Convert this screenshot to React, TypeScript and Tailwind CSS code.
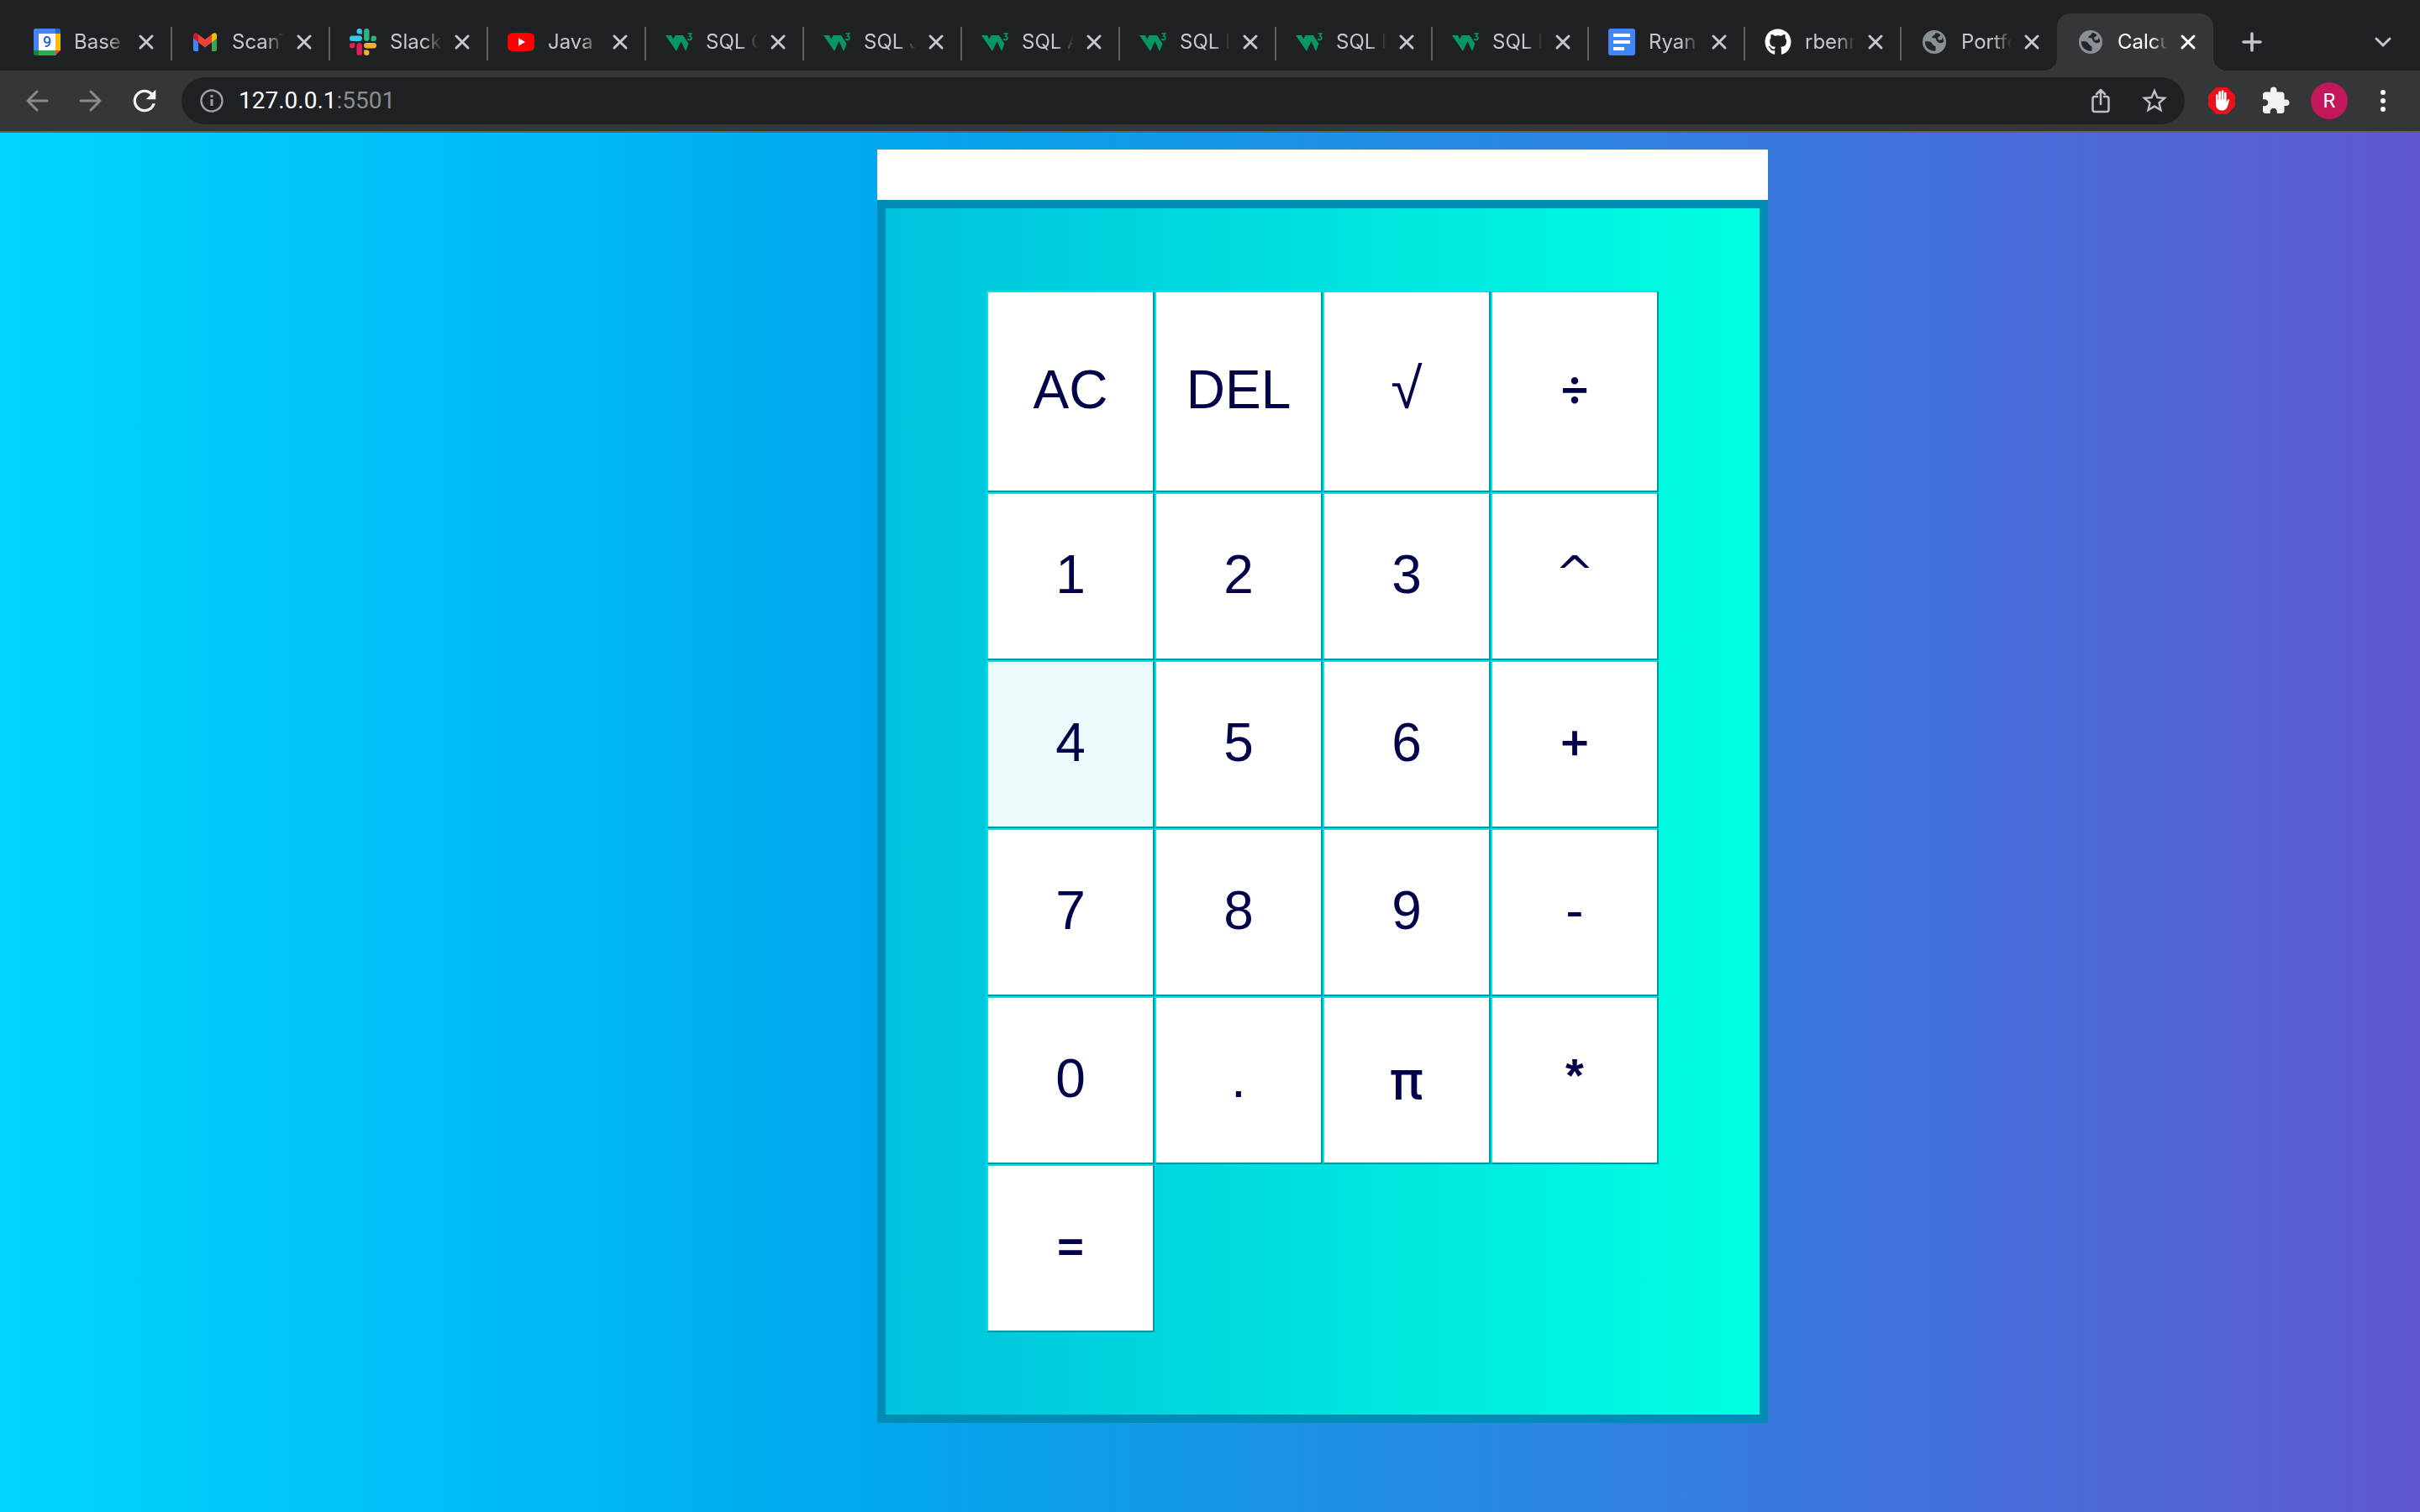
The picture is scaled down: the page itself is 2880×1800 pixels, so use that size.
import React, { useState } from "react";
import { FaGithub } from "react-icons/fa";
import { MdExtension, MdStarBorder, MdRefresh } from "react-icons/md";

function CalendarIcon() {
  return (
    <svg viewBox="0 0 32 32" className="size-8">
      <path d="M2 0h24v6H6v20H0V2a2 2 0 0 1 2-2z" fill="#4285f4" />
      <path d="M26 0h4a2 2 0 0 1 2 2v4h-6z" fill="#1967d2" />
      <path d="M26 6h6v20h-6z" fill="#fbbc04" />
      <path d="M6 26h20v6H6z" fill="#34a853" />
      <path d="M0 26h6v6H2a2 2 0 0 1-2-2z" fill="#188038" />
      <path d="M26 26h6l-6 6z" fill="#ea4335" />
      <path d="M6 6h20v20H6z" fill="#fff" />
      <text x="16" y="22" textAnchor="middle" fontFamily="Roboto, sans-serif" fontSize="18" fontWeight="500" fill="#1967d2">
        9
      </text>
    </svg>
  );
}

function GmailIcon() {
  return (
    <svg viewBox="0 0 32 32" className="size-8">
      <path d="M2 10l6 5v12H4a2 2 0 0 1-2-2z" fill="#4285f4" />
      <path d="M24 15l6-5v15a2 2 0 0 1-2 2h-4z" fill="#34a853" />
      <path d="M24 7l1.600-1.200C27.500 4.500 30 5.800 30 8v3.500l-6 5z" fill="#fbbc04" />
      <path d="M8 7v9.500l8 6 8-6V7l-8 6z" fill="#ea4335" />
      <path d="M2 8c0-2.200 2.500-3.500 4.400-2.200L8 7v9.500l-6-5z" fill="#c5221f" />
    </svg>
  );
}

function SlackIcon() {
  return (
    <svg viewBox="0 0 32 32" className="size-8">
      <g fill="#36c5f0">
        <path d="M11.700 0a3.200 3.200 0 0 0 0 6.400h3.200V3.200A3.200 3.200 0 0 0 11.700 0z" />
        <rect x="0" y="8.500" width="14.900" height="6.400" rx="3.200" />
      </g>
      <g fill="#2eb67d">
        <path d="M32 11.700a3.200 3.200 0 0 0-6.400 0v3.200h3.200a3.200 3.200 0 0 0 3.200-3.200z" />
        <rect x="17.100" y="0" width="6.400" height="14.900" rx="3.200" />
      </g>
      <g fill="#ecb22e">
        <path d="M20.300 32a3.200 3.200 0 0 0 0-6.400h-3.200v3.200a3.200 3.200 0 0 0 3.200 3.200z" />
        <rect x="17.100" y="17.100" width="14.900" height="6.400" rx="3.200" />
      </g>
      <g fill="#e01e5a">
        <path d="M0 20.300a3.200 3.200 0 0 0 6.400 0v-3.200H3.200A3.200 3.200 0 0 0 0 20.300z" />
        <rect x="8.500" y="17.100" width="6.400" height="14.900" rx="3.200" />
      </g>
    </svg>
  );
}

function YouTubeIcon() {
  return (
    <svg viewBox="0 0 32 32" className="size-8">
      <path d="M4 5.500c4-.700 20-.700 24 0 2 .3 3.400 1.500 3.600 3.500.5 4 .5 10 0 14-.2 2-1.600 3.200-3.600 3.500-4 .7-20 .7-24 0C2 26.200.600 25 .4 23c-.5-4-.5-10 0-14C.6 7 2 5.800 4 5.500z" fill="#f00" />
      <path d="M13 11.200v9.600l8-4.800z" fill="#fff" />
    </svg>
  );
}

function SchoolsIcon() {
  return (
    <svg viewBox="0 0 32 32" className="size-8">
      <path d="M0 8h7l2.200 4.500L11.500 8H21l6.500 10L24 27l-5.500-12L13 27z" fill="#059862" />
      <path d="M26.500 6h4.200l-2 3c2.800.2 2.800 4.200 0 4.400-1.200.1-2-.4-2.500-1.200" fill="none" stroke="#059862" strokeWidth="1.700" />
    </svg>
  );
}

function DocsIcon() {
  return (
    <svg viewBox="0 0 32 32" className="size-8">
      <rect width="32" height="32" rx="3" fill="#4285f4" />
      <path d="M6 6h20v4H6zM6 14h20v4H6zM6 22h13v4H6z" fill="#fff" />
    </svg>
  );
}

function GitHubIcon() {
  return <FaGithub className="size-8 text-white" />;
}

function GlobeIcon() {
  return (
    <svg viewBox="0 0 32 32" className="size-8">
      <circle cx="16" cy="16" r="14" fill="#889096" />
      <path
        d="M4.800 15.500c2.200-.3 5.200-.3 7 .5 2 .9 1.700 3.500 3.500 4.200 1 .4 2.200.3 2.200 1.500v4.800c-6.500 1-12.700-3.800-12.700-11z"
        fill="#222529"
      />
      <path
        d="M17.500 5c-.5 1.500-.6 2.800-2.500 3.500-1.600.6-2.500 1.700-1.200 2.600 1.200.8 3-.4 4 1 .8 1.200.2 2.600 1.700 3.400 1.600.8 2.400 2 4.200 1.800 1.500-.2 2.500-.7 3.500-1.500C27 10 23 5.500 17.500 5z"
        fill="#222529"
      />
      <path d="M20 10.500c2-.5 3.200-2 3.400-3.500l2.600 3.500-1.500 3-3.500.2z" fill="#889096" />
    </svg>
  );
}

function CloseIcon() {
  return (
    <svg viewBox="0 0 32 32" className="size-8" fill="none" stroke="currentColor" strokeWidth="3" strokeLinecap="round">
      <path d="M9 9l14 14M23 9L9 23" />
    </svg>
  );
}

type Tab = { title: string; icon: () => React.JSX.Element; wide: boolean };

const tabs: Tab[] = [
  { title: "Base", icon: CalendarIcon, wide: true },
  { title: "ScanT", icon: GmailIcon, wide: true },
  { title: "Slack", icon: SlackIcon, wide: true },
  { title: "Java -", icon: YouTubeIcon, wide: true },
  { title: "SQL C", icon: SchoolsIcon, wide: true },
  { title: "SQL J", icon: SchoolsIcon, wide: true },
  { title: "SQL A", icon: SchoolsIcon, wide: true },
  { title: "SQL I", icon: SchoolsIcon, wide: false },
  { title: "SQL I", icon: SchoolsIcon, wide: false },
  { title: "SQL I", icon: SchoolsIcon, wide: false },
  { title: "Ryan", icon: DocsIcon, wide: false },
  { title: "rbenn", icon: GitHubIcon, wide: false },
  { title: "Portfo", icon: GlobeIcon, wide: false },
  { title: "Calcu", icon: GlobeIcon, wide: false },
];

function TabItem({ tab, active, divided }: { tab: Tab; active: boolean; divided: boolean }) {
  const Icon = tab.icon;
  return (
    <div
      className={`relative flex h-[68px] items-center ${tab.wide ? "w-[188px]" : "w-[186px]"} ${
        active ? "rounded-t-2xl bg-[#35363a] text-white" : "text-[#c4c7cb]"
      }`}
    >
      {active && (
        <>
          <span className="absolute bottom-0 -left-4 size-4 bg-[radial-gradient(circle_at_0_0,#202124_16px,#35363a_16px)]" />
          <span className="absolute -right-4 bottom-0 size-4 bg-[radial-gradient(circle_at_100%_0,#202124_16px,#35363a_16px)]" />
        </>
      )}
      <button type="button" className="flex min-w-0 flex-1 items-center gap-4 pl-6 text-left">
        <span className="shrink-0">
          <Icon />
        </span>
        <span className="min-w-0 flex-1 overflow-hidden text-[24px] leading-8 whitespace-nowrap mask-[linear-gradient(to_right,#000_65%,transparent)]">
          {tab.title}
        </span>
      </button>
      <button type="button" aria-label={`Close ${tab.title}`} className="mr-[14px] ml-2 shrink-0">
        <CloseIcon />
      </button>
      {divided && <span className="absolute top-4 -right-px h-10 w-0.5 bg-[#5f6165]" />}
    </div>
  );
}

function TabStrip() {
  return (
    <header className="flex h-[84px] items-end bg-[#202124] pl-4">
      {tabs.map((tab, i) => (
        <TabItem key={i} tab={tab} active={i === tabs.length - 1} divided={i < tabs.length - 2} />
      ))}
      <button type="button" aria-label="New tab" className="mb-[18px] ml-[30px] text-[#c4c7cb]">
        <svg viewBox="0 0 32 32" className="size-8" fill="none" stroke="currentColor" strokeWidth="3.500" strokeLinecap="round">
          <path d="M16 6v20M6 16h20" />
        </svg>
      </button>
      <button type="button" aria-label="Search tabs" className="mr-7 mb-[18px] ml-auto text-[#c4c7cb]">
        <svg viewBox="0 0 32 32" className="size-8" fill="none" stroke="currentColor" strokeWidth="3" strokeLinecap="round">
          <path d="M8 12l8 8 8-8" />
        </svg>
      </button>
    </header>
  );
}

function Toolbar() {
  return (
    <nav className="flex h-[74px] items-center border-b-2 border-[#5f6165] bg-[#35363a] pr-7 pl-7">
      <button type="button" aria-label="Back" className="text-[#87898c]">
        <svg viewBox="0 0 32 32" className="size-8" fill="none" stroke="currentColor" strokeWidth="3" strokeLinecap="round" strokeLinejoin="round">
          <path d="M28 16H5M16 5L5 16l11 11" />
        </svg>
      </button>
      <button type="button" aria-label="Forward" className="ml-8 text-[#87898c]">
        <svg viewBox="0 0 32 32" className="size-8" fill="none" stroke="currentColor" strokeWidth="3" strokeLinecap="round" strokeLinejoin="round">
          <path d="M4 16h23M16 5l11 11-11 11" />
        </svg>
      </button>
      <button type="button" aria-label="Reload" className="ml-7 text-[#f1f3f4]">
        <MdRefresh className="size-10" />
      </button>
      <div className="ml-6 flex h-14 flex-1 items-center rounded-full bg-[#202124] pr-[18px] pl-5 text-[#bdc1c6]">
        <svg viewBox="0 0 32 32" className="size-8 shrink-0 text-[#9aa0a6]" fill="none" stroke="currentColor" strokeWidth="2.500">
          <circle cx="16" cy="16" r="12.500" />
          <path d="M16 14v8M16 9v3" strokeWidth="3" />
        </svg>
        <a href="#" className="ml-4 flex-1 font-[Roboto,sans-serif] text-[28px] leading-9 text-white">
          127.0.0.1<span className="text-[#8b8d90]">:5501</span>
        </a>
        <button type="button" aria-label="Share">
          <svg viewBox="0 0 32 32" className="size-8" fill="none" stroke="currentColor" strokeWidth="2.500" strokeLinecap="round" strokeLinejoin="round">
            <path d="M12 11H9a2.500 2.500 0 0 0-2.500 2.500v13A2.500 2.500 0 0 0 9 29h14a2.500 2.500 0 0 0 2.500-2.500v-13A2.500 2.500 0 0 0 23 11h-3M16 20V3.500M11 8l5-5 5 5" />
          </svg>
        </button>
        <button type="button" aria-label="Bookmark" className="ml-[30px]">
          <MdStarBorder className="size-9" />
        </button>
      </div>
      <button type="button" aria-label="Ad blocker" className="ml-7">
        <svg viewBox="0 0 32 32" className="size-8">
          <path d="M9.400 0h13.200L32 9.400v13.200L22.600 32H9.400L0 22.600V9.400z" fill="#e8131a" />
          <path
            d="M9 18V9.500a1.300 1.300 0 0 1 2.600 0V15h.6V6a1.400 1.400 0 0 1 2.800 0v8.500h.6V5a1.400 1.400 0 0 1 2.800 0v9.500h.6V7a1.300 1.300 0 0 1 2.600 0v11l1.200-3c.5-1.200 2.500-1.200 2.300.4L23.500 21c-.9 3.800-3.200 6.500-7 6.500-4.500 0-7.500-3-7.500-7.500z"
            fill="#fff"
          />
        </svg>
      </button>
      <button type="button" aria-label="Extensions" className="ml-[30px] text-[#f1f3f4]">
        <MdExtension className="size-9" />
      </button>
      <button type="button" aria-label="Profile" className="ml-6 size-11 rounded-full bg-[#c2185b] font-[Roboto,sans-serif] text-[24px] text-white">
        R
      </button>
      <button type="button" aria-label="Menu" className="ml-[26px] text-[#f1f3f4]">
        <svg viewBox="0 0 32 32" className="size-8" fill="currentColor">
          <circle cx="16" cy="6" r="3" />
          <circle cx="16" cy="16" r="3" />
          <circle cx="16" cy="26" r="3" />
        </svg>
      </button>
    </nav>
  );
}

const keys = ["AC", "DEL", "√", "÷", "1", "2", "3", "^", "4", "5", "6", "+", "7", "8", "9", "-", "0", ".", "π", "*", "="];

const symbolFont: Record<string, string> = {
  "√": "pb-2 text-[68px]",
  "÷": "pb-3 font-[Inter,sans-serif] font-medium text-[60px]",
  "^": "pb-2 font-['DejaVu_Sans',sans-serif] text-[56px]",
  "+": "pb-3 font-[Inter,sans-serif] font-medium text-[60px]",
  "=": "pb-3 font-[Inter,sans-serif] font-medium text-[60px]",
  "π": "font-[Inter,sans-serif] font-medium text-[64px]",
  "*": "pb-3 font-bold text-[56px]",
};

function Calculator() {
  const [value, setValue] = useState("");

  const press = (key: string) => {
    if (key === "AC") setValue("");
    else if (key === "DEL") setValue(value.slice(0, -1));
    else if (key !== "=") setValue(value + key);
  };

  return (
    <section className="ml-[36.25%] w-[1060px]">
      <input
        type="text"
        aria-label="Display"
        value={value}
        onChange={(e) => setValue(e.target.value)}
        className="block h-[60px] w-full bg-white px-4 text-right text-[40px] outline-none"
      />
      <div className="border-10 border-[#008cb7] bg-[linear-gradient(90deg,#00c2de,#00dddf_43%,#00ffe1_98%)] px-[120px] py-[98px]">
        <div className="grid auto-rows-[200px] grid-cols-4 grid-rows-[240px]">
          {keys.map((key) => (
            <button
              key={key}
              type="button"
              onClick={() => press(key)}
              className={`border-2 border-t-[#00e5ea] border-r-[#00989c] border-b-[#00989c] border-l-[#00e5ea] leading-[72px] text-[#02024a] ${
                symbolFont[key] ?? "pb-1 text-[64px]"
              } ${key === "4" ? "bg-[#ebf9fb]" : "bg-white"}`}
            >
              {key}
            </button>
          ))}
        </div>
      </div>
    </section>
  );
}

export default function App() {
  return (
    <div className="flex min-h-screen flex-col font-[Inter,sans-serif]">
      <TabStrip />
      <Toolbar />
      <main className="flex-1 bg-[linear-gradient(90deg,#00d5ff,#00a9ee_35%,#6058d0)] pt-5 font-['Liberation_Sans',Arial,sans-serif]">
        <Calculator />
      </main>
    </div>
  );
}
